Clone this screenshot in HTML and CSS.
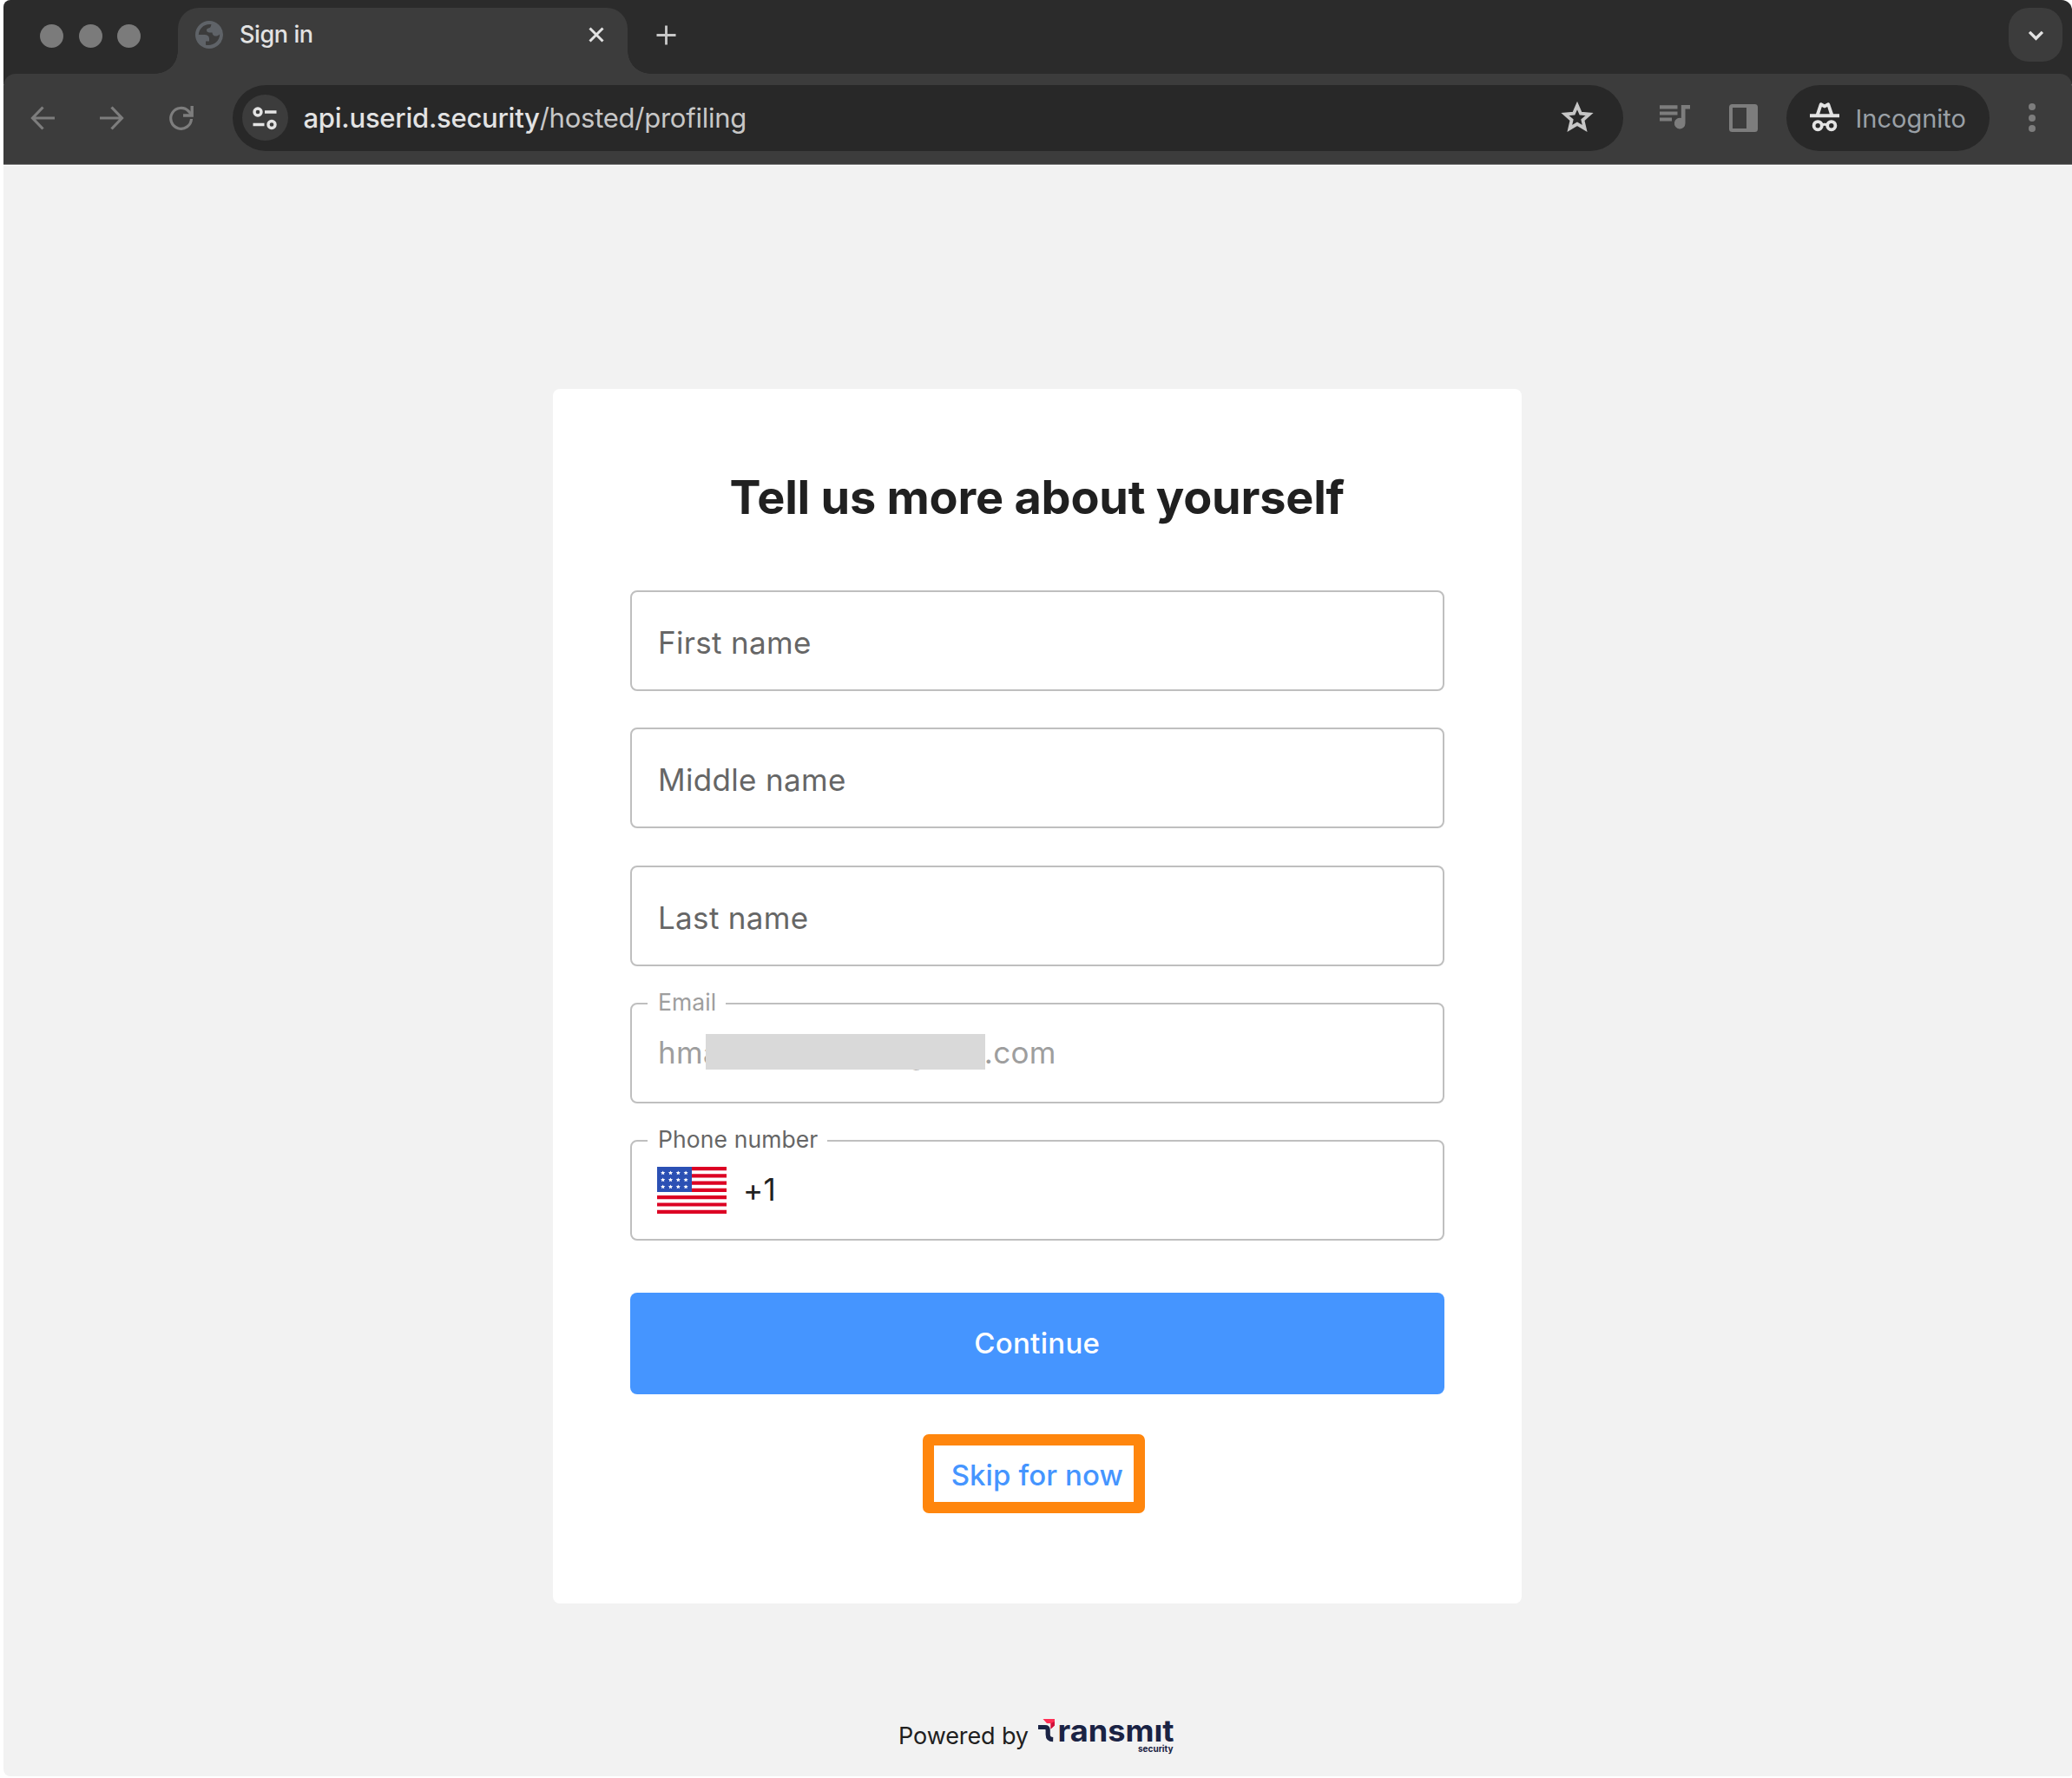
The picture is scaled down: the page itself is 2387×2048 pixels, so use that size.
FILE: index.html
```html
<!DOCTYPE html>
<html lang="en">
<head>
<meta charset="utf-8">
<title>Sign in</title>
<link rel="stylesheet" href="styles.css">
</head>
<body>
<div class="window">
  <header class="tabstrip">
    <div class="lights"><i></i><i></i><i></i></div>
    <div class="tab">
      <svg class="globe" viewBox="0 0 32 32"><circle cx="16" cy="16" r="16" fill="#5f6368"/><path d="M18.500 4C10 3 4 9 3.800 16H10.500c3.500 0 5.500 1.700 5.500 4.500V23.500h-4v4.200C20 29.500 28 24 28.200 15.500 26 17 25.500 17.700 23 17.500c-2-.2-3.300-1.500-3.500-4-3.200.2-6.500 0-6.500-2.500 0-3 3.800-2 4.700-4.200z" fill="#3c3c3c"/></svg>
      <span class="tab-title">Sign in</span>
      <svg class="close" viewBox="0 0 18 18"><path d="M1.500 1.500l15 15M16.500 1.500l-15 15" stroke="#e3e3e3" stroke-width="3"/></svg>
    </div>
    <svg class="plus" viewBox="0 0 24 24"><path d="M12 .5v23M.5 12h23" stroke="#c7c7c7" stroke-width="3"/></svg>
    <div class="tabsearch"><svg viewBox="0 0 20 14"><path d="M2 2l8 8 8-8" fill="none" stroke="#e3e3e3" stroke-width="3.600"/></svg></div>
  </header>
  <nav class="toolbar">
    <svg class="nav back" viewBox="0 0 28 28"><path d="M14.500 1.500L2.500 14l12 12.500M2 14h26" fill="none" stroke="#7d7d7d" stroke-width="3.200"/></svg>
    <svg class="nav forward" viewBox="0 0 28 28"><path d="M13.500 1.500l12 12.500-12 12.500M26 14H0" fill="none" stroke="#7d7d7d" stroke-width="3.200"/></svg>
    <svg class="nav reload" viewBox="0 0 28 28"><path d="M25.500 15A11.900 11.900 0 1 1 22.300 6.200L25.800 10" fill="none" stroke="#7d7d7d" stroke-width="3.200"/><path d="M26.200 0v11H16" fill="none" stroke="#7d7d7d" stroke-width="3.400"/></svg>
    <div class="omnibox">
      <div class="site"><svg viewBox="0 0 28 26"><g fill="none" stroke="#e3e3e3" stroke-width="3.400"><circle cx="6" cy="6" r="4"/><path d="M14 6h13.500M0.500 20.500h13"/><circle cx="22" cy="20.500" r="4"/></g></svg></div>
      <span class="url">api.userid.security<span class="path">/hosted/profiling</span></span>
      <svg class="star" viewBox="0 0 36 35"><path d="M18 4.500l4 9.200 10 .9-7.600 6.600 2.300 9.800L18 25.800 9.300 31l2.300-9.800L4 14.600l10-.9z" fill="none" stroke="#c7c7c7" stroke-width="3.800"/></svg>
    </div>
    <svg class="queue" viewBox="0 0 35 28"><path d="M0 2.300h20.500M0 9.500h20.500M0 16.500h14" stroke="#7d7d7d" stroke-width="4.200"/><path d="M24.800 0H35v4.600h-5.500V21a6.300 6.300 0 1 1-4.700-6z" fill="#7d7d7d"/></svg>
    <svg class="panel" viewBox="0 0 33 32"><rect width="33" height="32" rx="3.500" fill="#7d7d7d"/><path d="M4 4h16v24H4z" fill="#3c3c3c"/></svg>
    <div class="incognito">
      <svg viewBox="0 0 34 34"><path d="M0 13.300h7L10.800 2c.5-1.700 1.700-2.300 3-1.500L17 2.300 20.200.5c1.300-.8 2.500-.2 3 1.500L27 13.300h7v4H0z" fill="#e3e3e3"/><path d="M11.200 13.300L13.800 5 17 6.500 20.200 5l2.600 8.300z" fill="#282828"/><g fill="none" stroke="#e3e3e3" stroke-width="3.800"><circle cx="9.200" cy="26.700" r="4.600"/><circle cx="24.800" cy="26.700" r="4.600"/><path d="M13.500 25.800q3.500-1.200 7 0" stroke-width="3"/></g></svg>
      <span>Incognito</span>
    </div>
    <div class="menu"><i></i><i></i><i></i></div>
  </nav>
  <main class="page">
    <section class="card">
      <h1>Tell us more about yourself</h1>
      <form class="fields">
        <div class="field empty"><span>First name</span></div>
        <div class="field empty"><span>Middle name</span></div>
        <div class="field empty"><span>Last name</span></div>
        <div class="field disabled"><label>Email</label><span class="mail-start">hma</span><span class="mail-mid">g</span><span class="mail-end">.com</span><i class="redact"></i></div>
        <div class="field phone"><label>Phone number</label>
          <svg class="flag" viewBox="0 0 80 54"><path d="M0 0h80v54H0z" fill="#fff"/><path d="M0 2.100h80M0 10.300h80M0 18.600h80M0 26.900h80M0 35.200h80M0 43.500h80M0 51.800h80" stroke="#dc0023" stroke-width="4.200"/><path d="M0 0h40v29H0z" fill="#2b50b4"/><defs><path id="s" d="M0-2.600l.7 1.700 1.900.1-1.400 1.200.4 1.800L0 1.300l-1.600.9.4-1.800L-2.600-.8l1.900-.1z" fill="#fff"/></defs><use href="#s" x="6.700" y="7"/><use href="#s" x="15.500" y="7"/><use href="#s" x="24.300" y="7"/><use href="#s" x="33.100" y="7"/><use href="#s" x="6.700" y="15"/><use href="#s" x="15.500" y="15"/><use href="#s" x="24.300" y="15"/><use href="#s" x="33.100" y="15"/><use href="#s" x="6.700" y="23"/><use href="#s" x="15.500" y="23"/><use href="#s" x="24.300" y="23"/><use href="#s" x="33.100" y="23"/></svg>
          <span class="code">+1</span></div>
      </form>
      <button class="continue" type="button">Continue</button>
      <a class="skip">Skip for now<i class="highlight"></i></a>
    </section>
    <footer class="powered">
      <span>Powered by</span>
      <svg class="logo" viewBox="0 0 156 44"><path d="M0 9.500h8q3.200 0 3.200 3.200V18q0 5.500 6 5.700" fill="none" stroke="#1a2344" stroke-width="5.200"/><path d="M5.500 0H19v7l-4.500 4.500V5H10z" fill="#ff2f55"/><path d="M14.500 5L19 3v4.500l-4.500 4z" fill="#d0103a"/><text class="word" x="22.500" y="26" textLength="134" lengthAdjust="spacingAndGlyphs">ransmıt</text><text class="sub" x="115" y="38" textLength="40.500" lengthAdjust="spacingAndGlyphs">security</text></svg>
    </footer>
  </main>
</div>
</body>
</html>
```
FILE: styles.css
```css
* { box-sizing: border-box; }
body { margin: 0; background: #fff; font-family: Inter, "Liberation Sans", sans-serif; }
svg { display: block; flex: none; overflow: visible; }
i { display: block; }

.window { margin-left: 4px; height: 2046px; display: flex; flex-direction: column; background: #f2f2f2; border-radius: 8px 12px 4px 8px; overflow: hidden; }

.tabstrip { height: 97px; margin-bottom: -12px; flex: none; display: flex; align-items: flex-start; background: #2b2b2b; padding: 9px 11px 0 42px; }
.lights { display: flex; gap: 17.500px; margin-top: 18.500px; }
.lights i { width: 27px; height: 27px; border-radius: 50%; background: #7b7b7b; }
.tab { position: relative; width: 518px; height: 76px; margin-left: 43px; padding: 0 27px 14px 20px; display: flex; align-items: center; background: #3c3c3c; border-radius: 24px 24px 0 0; }
.tab::before, .tab::after { content: ""; position: absolute; bottom: 0; width: 26px; height: 26px; }
.tab::before { left: -26px; background: radial-gradient(circle at 0 0, transparent 25.500px, #3c3c3c 26px); }
.tab::after { right: -26px; background: radial-gradient(circle at 100% 0, transparent 25.500px, #3c3c3c 26px); }
.globe { width: 32px; height: 32px; }
.tab-title { margin-left: 19px; color: #e3e3e3; font-size: 27px; font-weight: 500; line-height: 34px; letter-spacing: -0.4px; margin-top: -1px; }
.close { width: 18px; height: 18px; margin-left: auto; }
.plus { width: 23px; height: 23px; margin: 20px 0 0 33px; }
.tabsearch { width: 62px; height: 62px; margin-left: auto; border-radius: 23px; background: #3c3c3c; display: flex; align-items: center; justify-content: center; }
.tabsearch svg { width: 19px; height: 13px; margin-top: 2px; }

.toolbar { position: relative; height: 105px; flex: none; display: flex; align-items: center; padding-left: 31px; padding-bottom: 3px; background: #3c3c3c; border-bottom: 1px solid #858585; border-radius: 14px 14px 0 0; }
.nav { width: 28px; height: 28px; }
.forward { margin-left: 52px; }
.reload { margin-left: 52px; }
.omnibox { margin-left: 45px; width: 1602px; height: 76px; border-radius: 38px; background: #282828; display: flex; align-items: center; padding: 0 35px 0 10.500px; }
.site { width: 53px; height: 53px; border-radius: 50%; background: #3c3c3c; display: flex; align-items: center; justify-content: center; }
.site svg { width: 28px; height: 26px; }
.url { margin-left: 18px; margin-top: 1px; color: #e3e3e3; font-size: 31px; font-weight: 500; line-height: 40px; letter-spacing: -0.250px; }
.path { color: #c7c7c7; font-weight: 400; }
.star { width: 36px; height: 35px; margin-left: auto; margin-top: -2px; }
.queue { width: 35px; height: 28px; margin-left: 42px; margin-top: -2px; }
.panel { width: 33px; height: 32px; margin-left: 45px; }
.incognito { margin-left: 33px; width: 234px; height: 76px; border-radius: 38px; background: #282828; display: flex; align-items: center; padding-left: 27px; color: #9aa0a6; font-size: 29px; line-height: 40px; }
.incognito svg { width: 34px; height: 34px; margin-top: -1px; }
.incognito span { margin: 2px 0 0 18.500px; }
.menu { margin-left: 45px; display: flex; flex-direction: column; gap: 4.500px; }
.menu i { width: 8px; height: 8px; border-radius: 50%; background: #7d7d7d; }

.page { flex: 1; display: flex; flex-direction: column; align-items: center; padding-top: 257px; border-top: 1px solid #fff; }
.card { width: 1116px; height: 1398.500px; flex: none; margin-left: -1px; background: #fff; border-radius: 8px; padding: 93px 89.500px 0 89px; display: flex; flex-direction: column; align-items: center; }
h1 { margin: 0 0 75px; color: #202020; font-size: 54px; line-height: 64px; font-weight: 700; letter-spacing: -0.220px; white-space: nowrap; }
.fields { align-self: stretch; display: flex; flex-direction: column; gap: 42.300px; }
.field { position: relative; height: 116px; border: 2px solid #bfbfbf; border-radius: 8px; display: flex; align-items: center; padding-left: 30px; font-size: 35px; line-height: 44px; letter-spacing: 0.330px; color: #666; }
.empty { padding-top: 4px; }
.field label { position: absolute; left: 18px; top: -20px; padding: 0 11px 0 12px; background: #fff; font-size: 26.500px; line-height: 34px; letter-spacing: 0.100px; color: #666; }
.disabled, .disabled label { color: #9e9e9e; }
.disabled > span, .code { margin-top: -2px; }
.disabled .mail-mid { margin-left: 215px; }
.disabled .mail-end { margin-left: 67px; }
.redact { position: absolute; left: 84.500px; top: 34.500px; width: 322px; height: 41px; background: #d9d9d9; }
.flag { width: 80px; height: 54px; margin-left: -1px; }
.code { margin-left: 19px; color: #212121; }
.continue { align-self: stretch; flex: none; height: 116.500px; margin-top: 60px; border: 0; border-radius: 8px; background: #4595ff; color: #fff; font: 500 33px/40px Inter, "Liberation Sans", sans-serif; letter-spacing: 0.300px; }
.skip { position: relative; margin-top: 73.500px; color: #4595ff; font-size: 33px; line-height: 40px; font-weight: 500; letter-spacing: 0.100px; }
.highlight { position: absolute; left: -33px; top: -27px; width: 256px; height: 91px; border: 13px solid #ff860d; border-radius: 7px; }

.powered { margin: 133px 4px 0 0; display: flex; align-items: flex-start; color: #202020; font-size: 27px; line-height: 36px; letter-spacing: -0.100px; }
.powered span { margin-top: 2px; }
.logo { width: 156px; height: 44px; margin-left: 11px; }
.word { font: 700 34px Inter, sans-serif; fill: #1a2344; letter-spacing: 0; }
.sub { font: 700 10.500px Inter, sans-serif; fill: #1a2344; letter-spacing: 0; }
```
